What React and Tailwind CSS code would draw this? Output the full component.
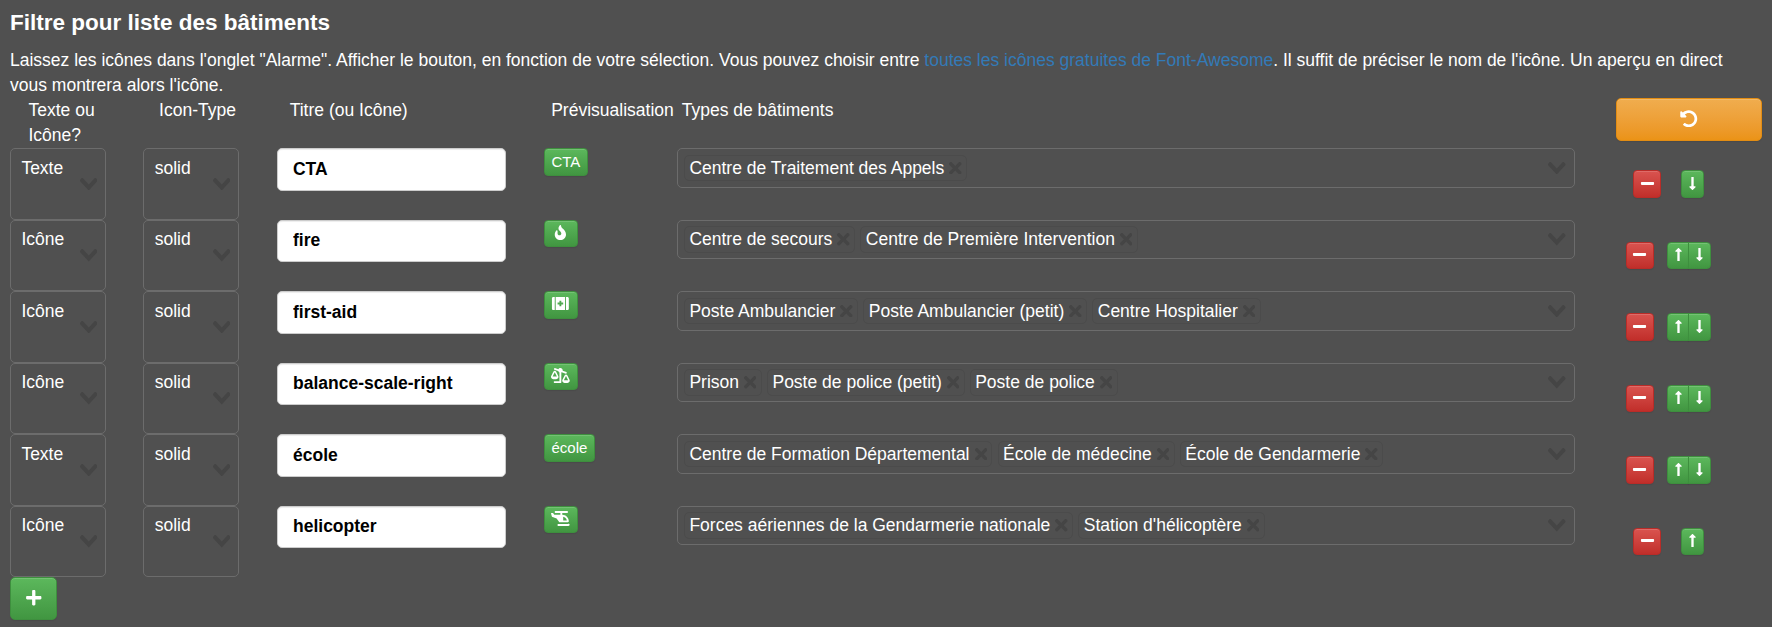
import { FaBalanceScaleRight, FaFire, FaFirstAid, FaHelicopter, FaLongArrowAltDown, FaLongArrowAltUp, FaMinus, FaPlus, FaUndoAlt } from "react-icons/fa";

const rows = [
  { kind: "Texte", title: "CTA", types: ["Centre de Traitement des Appels"] },
  { kind: "Icône", title: "fire", icon: FaFire, types: ["Centre de secours", "Centre de Première Intervention"] },
  { kind: "Icône", title: "first-aid", icon: FaFirstAid, types: ["Poste Ambulancier", "Poste Ambulancier (petit)", "Centre Hospitalier"] },
  { kind: "Icône", title: "balance-scale-right", icon: FaBalanceScaleRight, types: ["Prison", "Poste de police (petit)", "Poste de police"] },
  { kind: "Texte", title: "école", types: ["Centre de Formation Départemental", "École de médecine", "École de Gendarmerie"] },
  { kind: "Icône", title: "helicopter", icon: FaHelicopter, types: ["Forces aériennes de la Gendarmerie nationale", "Station d'hélicoptère"] },
];

const green = "border border-[#3e8f3e] bg-linear-to-b from-[#5cb85c] to-[#419641] text-white shadow-[inset_0_1px_0_rgba(255,255,255,0.15),0_1px_1px_rgba(0,0,0,0.075)]";
const red = "border border-[#b92c28] bg-linear-to-b from-[#d9534f] to-[#c12e2a] text-white shadow-[inset_0_1px_0_rgba(255,255,255,0.15),0_1px_1px_rgba(0,0,0,0.075)]";
const small = "flex h-[27.5px] items-center justify-center text-[15px] leading-[22.5px]";

function Chevron() {
  return (
    <svg viewBox="0 0 14 10" className="h-[12.5px] w-[17.5px] shrink-0 fill-[#454545]">
      <path d="M9.211364 7.59931l4.48338-4.867229c.407008-.441854.407008-1.158247 0-1.60046l-.73712-.80023c-.407008-.441854-1.066904-.441854-1.474243 0L7 5.198617 2.51662.33139c-.407008-.441853-1.066904-.441853-1.474243 0l-.737121.80023c-.407008.441854-.407008 1.158248 0 1.600461l4.48338 4.867228L7 10l2.211364-2.40069z" />
    </svg>
  );
}

function Cross() {
  return (
    <svg viewBox="0 0 10 10" className="ml-[5px] h-[12.5px] w-[12.5px] shrink-0 fill-[#454545]">
      <path d="M6.895455 5l2.842897-2.842898c.348864-.348863.348864-.914488 0-1.263636L9.106534.261648c-.348864-.348864-.914489-.348864-1.263636 0L5 3.104545 2.157102.261648c-.348863-.348864-.914488-.348864-1.263636 0L.261648.893466c-.348864.348864-.348864.914489 0 1.263636L3.104545 5 .261648 7.842898c-.348864.348863-.348864.914488 0 1.263636l.631818.631818c.348864.348864.914773.348864 1.263636 0L5 6.895455l2.842898 2.842897c.348863.348864.914772.348864 1.263636 0l.631818-.631818c.348864-.348864.348864-.914489 0-1.263636L6.895455 5z" />
    </svg>
  );
}

function Select({ value }) {
  return (
    <div className="flex h-[71.5px] w-24 items-center justify-between rounded-[5px] border border-[#6c6c6c] pr-2 pl-[10.4px]">
      <span className="self-start pt-[6.5px]">{value}</span>
      <Chevron />
    </div>
  );
}

function MultiSelect({ values }) {
  return (
    <div className="flex h-[39.5px] w-[898px] items-center rounded-[5px] border border-[#6c6c6c] pr-2 pl-[6px]">
      <div className="flex flex-1 gap-[5.2px]">
        {values.map((v) => (
          <span key={v} className="flex h-[26.5px] items-center rounded-[5px] border border-[#4b4b4b] px-[4.4px] whitespace-nowrap">
            <span className="pt-px">{v}</span>
            <Cross />
          </span>
        ))}
      </div>
      <Chevron />
    </div>
  );
}

function Row({ row, first, last }) {
  const Icon = row.icon;
  return (
    <div className="grid h-[71.5px] grid-cols-[133.3px_133.7px_267px_133px_939px_146px] items-start">
      <Select value={row.kind} />
      <Select value="solid" />
      <input
        defaultValue={row.title}
        className="h-[42.5px] w-[229px] rounded-[5px] border border-[#cccccc] bg-white px-[15px] text-[17.5px] font-bold text-black shadow-[inset_0_1px_1px_rgba(0,0,0,0.075)] outline-none"
      />
      <button className={`${small} ${green} w-fit rounded-[4px] px-[6.5px]`}>
        {Icon ? <span className="flex w-[18.75px] justify-center pb-[2px]"><Icon className="h-[15px] w-[18.75px] shrink-0" /></span> : row.title}
      </button>
      <MultiSelect values={row.types} />
      <div className={`mt-[22px] -ml-[41px] flex justify-center ${first || last ? "gap-5" : "gap-[13px]"} w-[187px]`}>
        <button className={`${small} ${red} w-7 rounded-[4px] pb-px`}><FaMinus /></button>
        <div className="flex">
          {!first && <button className={`${small} ${green} w-[22.5px] pb-px ${last ? "rounded-[4px]" : "rounded-l-[4px]"}`}><FaLongArrowAltUp /></button>}
          {!last && <button className={`${small} ${green} w-[22.5px] pb-px ${first ? "rounded-[4px]" : "-ml-px rounded-r-[4px]"}`}><FaLongArrowAltDown /></button>}
        </div>
      </div>
    </div>
  );
}

export default function App() {
  return (
    <main className="h-[627px] overflow-hidden bg-[#505050] pt-[9px] pl-[10px] font-['Liberation_Sans',Arial,sans-serif] text-[17.5px] leading-[25px] text-white">
      <h4 className="h-[39px] text-[22.5px] leading-7 font-bold">Filtre pour liste des bâtiments</h4>
      <p className="w-[1752px]">
        Laissez les icônes dans l'onglet "Alarme". Afficher le bouton, en fonction de votre sélection. Vous pouvez choisir entre{" "}
        <a className="text-[#337ab7]">toutes les icônes gratuites de Font-Awesome</a>. Il suffit de préciser le nom de l'icône. Un aperçu en direct vous montrera alors l'icône.
      </p>
      <div className="grid h-[50px] grid-cols-[130.6px_130.6px_261.5px_130.5px_934.3px_146px] pl-[18.5px]">
        <div className="w-20">Texte ou Icône?</div>
        <div>Icon-Type</div>
        <div>Titre (ou Icône)</div>
        <div>Prévisualisation</div>
        <div>Types de bâtiments</div>
        <button className="flex h-[43px] w-[146px] items-center justify-center rounded-[5px] border border-[#e38d13] bg-linear-to-b from-[#f0ad4e] to-[#eb9316] pb-[2px] shadow-[inset_0_1px_0_rgba(255,255,255,0.15),0_1px_1px_rgba(0,0,0,0.075)]">
          <FaUndoAlt />
        </button>
      </div>
      {rows.map((row, i) => (
        <Row key={row.title} row={row} first={i === 0} last={i === rows.length - 1} />
      ))}
      <button className={`flex h-[43px] w-[47px] items-center justify-center rounded-[5px] pb-[2px] ${green}`}>
        <FaPlus />
      </button>
    </main>
  );
}
